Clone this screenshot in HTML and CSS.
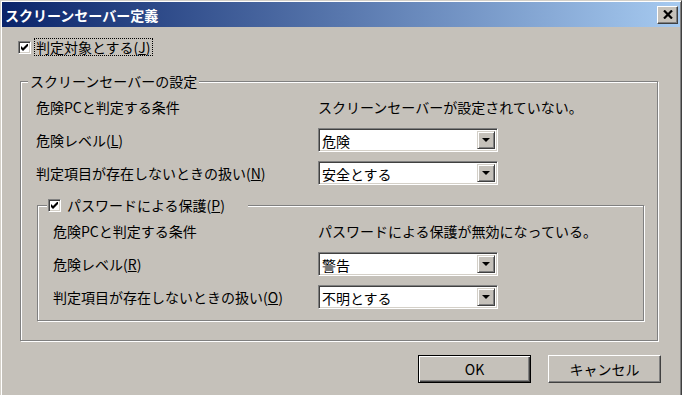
FILE: index.html
```html
<!DOCTYPE html>
<html lang="ja">
<head>
    <meta charset="UTF-8">
    <title>スクリーンセーバー定義</title>
    <link rel="stylesheet" href="styles.css">
</head>
<body>
    <div class="window">
        <div class="titlebar">
            <span class="title">スクリーンセーバー定義</span>
            <span class="close-btn">
                <svg width="10" height="9" viewBox="0 0 10 9"><path d="M1 0.5 L9 8.5 M9 0.5 L1 8.5" stroke="#000" stroke-width="2.2" fill="none"/></svg>
            </span>
        </div>

        <div class="dialog-body">
            <label class="check-row">
                <span class="checkbox"><svg width="7" height="7" viewBox="0 0 7 7"><path d="M0 2 L2 4 L7 -1 L7 2 L2 7 L0 5 Z" fill="#000"/></svg></span>
                <span class="focus-text">判定対象とする(<u>J</u>)</span>
            </label>

            <fieldset class="group">
                <legend>スクリーンセーバーの設定</legend>
                <div class="group-body">
                    <div class="form-grid">
                        <span>危険PCと判定する条件</span>
                        <span>スクリーンセーバーが設定されていない。</span>

                        <span>危険レベル(<u>L</u>)</span>
                        <div class="combo"><span class="combo-value">危険</span><span class="combo-arrow"></span></div>

                        <span>判定項目が存在しないときの扱い(<u>N</u>)</span>
                        <div class="combo"><span class="combo-value">安全とする</span><span class="combo-arrow"></span></div>
                    </div>

                    <fieldset class="group inner">
                        <legend class="check-legend">
                            <span class="checkbox"><svg width="7" height="7" viewBox="0 0 7 7"><path d="M0 2 L2 4 L7 -1 L7 2 L2 7 L0 5 Z" fill="#000"/></svg></span>
                            <span>パスワードによる保護(<u>P</u>)</span>
                        </legend>
                        <div class="group-body">
                            <div class="form-grid">
                                <span>危険PCと判定する条件</span>
                                <span>パスワードによる保護が無効になっている。</span>

                                <span>危険レベル(<u>R</u>)</span>
                                <div class="combo"><span class="combo-value">警告</span><span class="combo-arrow"></span></div>

                                <span>判定項目が存在しないときの扱い(<u>O</u>)</span>
                                <div class="combo"><span class="combo-value">不明とする</span><span class="combo-arrow"></span></div>
                            </div>
                        </div>
                    </fieldset>
                </div>
            </fieldset>
        </div>

        <div class="buttons">
            <button class="btn btn-default">OK</button>
            <button class="btn">キャンセル</button>
        </div>
    </div>
</body>
</html>
```

FILE: styles.css
```css
body {
    margin: 0;
    font-family: "Noto Sans CJK JP", "Noto Sans", sans-serif;
    font-size: 14px;
    color: #000;
    background: #c5c1ba;
}
.window {
    width: 682px;
    height: 395px;
    box-sizing: border-box;
    overflow: hidden;
    background: #c5c1ba;
    border-top: 1px solid #d4d0c8;
    border-left: 1px solid #d4d0c8;
    border-right: 1px solid #404040;
    box-shadow: inset 1px 1px #fff, inset -1px 0 #808080;
    padding: 1px 1px 0 1px;
}
.titlebar {
    height: 25px;
    display: flex;
    align-items: center;
    justify-content: space-between;
    padding: 0 2px 0 3px;
    background: linear-gradient(to right, #0a246a, #a6caf0);
}
.title {
    color: #fff;
    font-weight: bold;
    font-size: 14px;
    line-height: 18px;
}
.close-btn {
    width: 21px;
    height: 18px;
    box-sizing: border-box;
    display: flex;
    align-items: center;
    justify-content: center;
    background: #c5c1ba;
    border: 1px solid;
    border-color: #fff #404040 #404040 #fff;
    box-shadow: inset -1px -1px #808080;
}
.dialog-body {
    padding: 11px 22px 0 16px;
}
.check-row {
    display: flex;
    align-items: center;
    gap: 4px;
    height: 18px;
}
.checkbox {
    width: 13px;
    height: 13px;
    flex: none;
    box-sizing: border-box;
    display: flex;
    align-items: center;
    justify-content: center;
    background: #fff;
    border: 1px solid;
    border-color: #808080 #fff #fff #808080;
    box-shadow: inset 1px 1px #404040, inset -1px -1px #d4d0c8;
}
.focus-text {
    outline: 1px dotted #000;
    padding: 0 1px;
    line-height: 16px;
}
u {
    text-decoration-thickness: 1px;
    text-underline-offset: 1px;
}

/* group boxes */
.group {
    margin: 16px 0 0 2px;
    padding: 0;
    min-width: 0;
    border: 1px solid #808080;
    box-shadow: inset 1px 1px #fff, 1px 1px #fff;
}
.group legend {
    margin-left: 7px;
    padding: 0 2px;
    line-height: 18px;
    background: #c5c1ba;
}
.group-body {
    padding: 5px 13px 19px 15px;
}
.form-grid {
    display: grid;
    grid-template-columns: 282px 180px;
    grid-auto-rows: 24px;
    row-gap: 9px;
    align-items: center;
    line-height: 18px;
    white-space: nowrap;
}
.group.inner {
    margin: 11px 0 0 1px;
}
.group.inner legend {
    margin-left: 9px;
    padding: 0 1px;
    width: 201px;
    box-sizing: border-box;
    display: flex;
    align-items: center;
    gap: 6px;
}
.group.inner .group-body {
    padding: 5px 13px 11px 15px;
}
.group.inner .form-grid {
    grid-template-columns: 265px 180px;
}

/* combo boxes */
.combo {
    height: 24px;
    box-sizing: border-box;
    display: flex;
    align-items: stretch;
    padding: 2px;
    background: #fff;
    border: 1px solid;
    border-color: #808080 #fff #fff #808080;
    box-shadow: inset 1px 1px #404040, inset -1px -1px #d4d0c8;
}
.combo-value {
    flex: 1;
    padding-left: 1px;
    line-height: 20px;
}
.combo-arrow {
    width: 18px;
    box-sizing: border-box;
    display: flex;
    align-items: center;
    justify-content: center;
    background: #c5c1ba;
    border: 1px solid;
    border-color: #d4d0c8 #404040 #404040 #d4d0c8;
    box-shadow: inset 1px 1px #fff, inset -1px -1px #808080;
}
.combo-arrow::after {
    content: "";
    border-top: 4px solid #000;
    border-left: 4px solid transparent;
    border-right: 4px solid transparent;
}

/* buttons */
.buttons {
    display: flex;
    justify-content: flex-end;
    gap: 17px;
    padding: 14px 19px 0 0;
}
.btn {
    width: 113px;
    height: 28px;
    padding: 0;
    font-family: inherit;
    font-size: 14px;
    color: #000;
    background: #c5c1ba;
    border: 1px solid;
    border-color: #fff #404040 #404040 #fff;
    box-shadow: inset -1px -1px #808080;
}
.btn-default {
    border: 1px solid #000;
    box-shadow: inset 1px 1px #fff, inset -1px -1px #404040, inset -2px -2px #808080;
}
```
